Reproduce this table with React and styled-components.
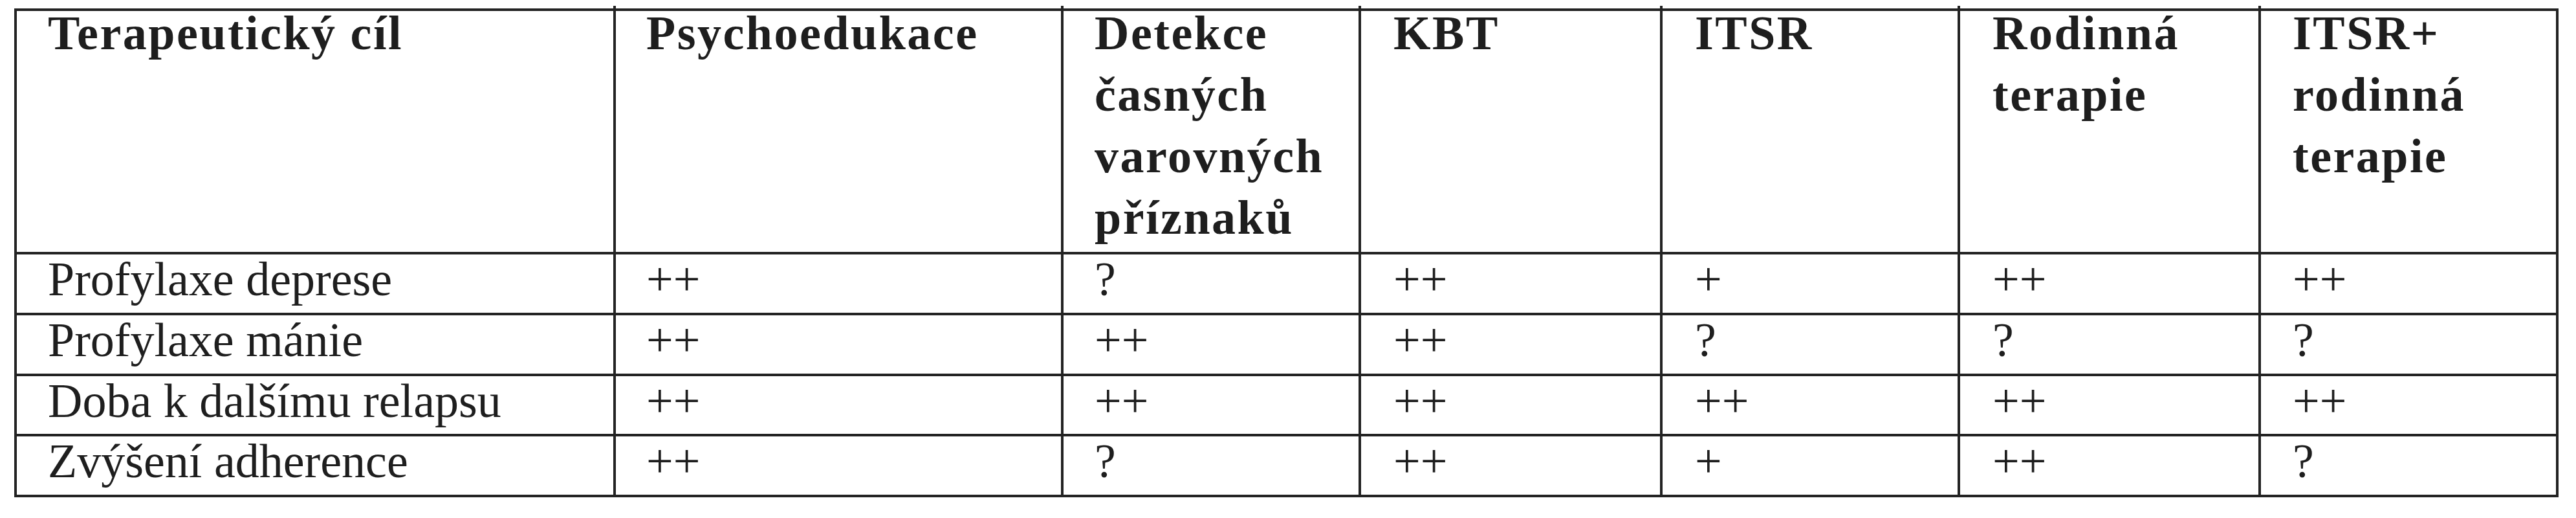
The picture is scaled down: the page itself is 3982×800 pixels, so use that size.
import styled, { createGlobalStyle, css } from "styled-components";

const GlobalStyle = createGlobalStyle`
  html, body {
    margin: 0;
    padding: 0;
    background: #ffffff;
  }
  body {
    font-family: "Liberation Serif", "Times New Roman", serif;
    color: #1e1e1e;
  }
`

const LINE = "#232323";

const Page = styled.div`
  padding: 13px 0 0 22px;
`

const Grid = styled.div`
  display: grid;
  grid-template-columns: ${(p) => p.$cols.map((c) => `${c}px`).join(" ")};
  grid-template-rows: 376px 94px 94px 93px 94px;
  width: max-content;
  border-top: 4px solid ${LINE};
  border-left: 4px solid ${LINE};
`

const Cell = styled.div`
  position: relative;
  box-sizing: border-box;
  border-right: 4px solid ${LINE};
  border-bottom: 4px solid ${LINE};
  padding: 1px 0 0 ${(p) => p.$pad}px;
  font-size: 74px;
  line-height: 74px;
  white-space: nowrap;

  ${(p) => p.$stub === "top" && css`
    &::after {
      content: "";
      position: absolute;
      right: -4px;
      top: -8px;
      width: 4px;
      height: 4px;
      background: ${LINE};
    }
  `}

  ${(p) => p.$stub === "bottom" && css`
    &::after {
      content: "";
      position: absolute;
      right: -4px;
      bottom: -9px;
      width: 4px;
      height: 5px;
      background: ${LINE};
    }
  `}
`

const HeadCell = styled(Cell)`
  padding-top: 0;
  font-weight: bold;
  line-height: 95px;
  letter-spacing: 2.5px;
`

const HeadText = styled.div`
  margin-top: -13px;
`

const cols = [926, 692, 460, 466, 460, 465, 460];
const pads = [48, 47, 48, 50, 50, 50, 49];

const headers = [
  ["Terapeutický cíl"],
  ["Psychoedukace"],
  ["Detekce", "časných", "varovných", "příznaků"],
  ["KBT"],
  ["ITSR"],
  ["Rodinná", "terapie"],
  ["ITSR+", "rodinná", "terapie"],
];

const rows = [
  ["Profylaxe deprese", "++", "?", "++", "+", "++", "++"],
  ["Profylaxe mánie", "++", "++", "++", "?", "?", "?"],
  ["Doba k dalšímu relapsu", "++", "++", "++", "++", "++", "++"],
  ["Zvýšení adherence", "++", "?", "++", "+", "++", "?"],
];

const App = () => {
  return (
    <Page>
      <GlobalStyle />
      <Grid $cols={cols}>
        {headers.map((lines, i) => (
          <HeadCell key={"h" + i} $pad={pads[i]} $stub={i < cols.length - 1 ? "top" : null}>
            <HeadText>
              {lines.map((l, j) => (
                <div key={j}>{l}</div>
              ))}
            </HeadText>
          </HeadCell>
        ))}
        {rows.map((row, r) =>
          row.map((val, c) => (
            <Cell
              key={r + "-" + c}
              $pad={pads[c]}
              $stub={r === rows.length - 1 && c < cols.length - 1 ? "bottom" : null}
            >
              {val}
            </Cell>
          ))
        )}
      </Grid>
    </Page>
  );
};

export default App;
